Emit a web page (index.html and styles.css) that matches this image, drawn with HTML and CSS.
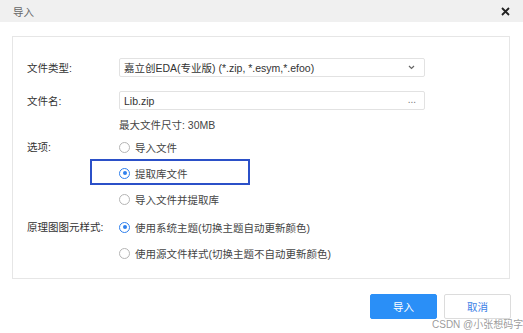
FILE: index.html
```html
<!DOCTYPE html>
<html lang="zh">
<head>
<meta charset="utf-8">
<link rel="stylesheet" href="styles.css">
</head>
<body>
<div class="dialog">
  <div class="titlebar">
    <span class="title">导入</span>
    <span class="close">
      <svg width="9" height="9" viewBox="0 0 9 9"><path d="M1 1L8 8M8 1L1 8" stroke="#222" stroke-width="1.8" fill="none"/></svg>
    </span>
  </div>
  <div class="panel">
    <div class="row">
      <div class="label">文件类型:</div>
      <div class="control">
        <div class="field select">
          <span class="value">嘉立创EDA(专业版) (*.zip, *.esym,*.efoo)</span>
          <svg class="chev" width="7" height="5" viewBox="0 0 7 5"><path d="M1 1L3.5 3.5L6 1" stroke="#666" stroke-width="1.2" fill="none"/></svg>
        </div>
      </div>
    </div>
    <div class="row row-gap">
      <div class="label">文件名:</div>
      <div class="control">
        <div class="field">
          <span class="value">Lib.zip</span>
          <span class="dots">...</span>
        </div>
      </div>
    </div>
    <div class="hint">最大文件尺寸: 30MB</div>
    <div class="group">
      <div class="label glabel">选项:</div>
      <div class="options">
        <div class="radio"><span class="circle"></span>导入文件</div>
        <div class="radio marked"><span class="circle on"></span>提取库文件<span class="highlight"></span></div>
        <div class="radio"><span class="circle"></span>导入文件并提取库</div>
      </div>
    </div>
    <div class="group group2">
      <div class="label glabel">原理图图元样式:</div>
      <div class="options">
        <div class="radio"><span class="circle on"></span>使用系统主题(切换主题自动更新颜色)</div>
        <div class="radio"><span class="circle"></span>使用源文件样式(切换主题不自动更新颜色)</div>
      </div>
    </div>
  </div>
  <div class="footer">
    <button class="btn primary">导入</button>
    <button class="btn">取消</button>
  </div>
  <div class="watermark">CSDN @小张想码字</div>
</div>
</body>
</html>
```
FILE: styles.css
```css
* { box-sizing: border-box; }
html, body { margin: 0; padding: 0; background: #fff; }
body {
  font-family: "Liberation Sans", "Noto Sans CJK SC", sans-serif;
  font-size: 10.5px;
  color: #333;
}
.dialog { position: relative; width: 523px; height: 333px; overflow: hidden; }
.titlebar {
  height: 22px;
  background: #f0f0f0;
  display: flex;
  align-items: center;
  justify-content: space-between;
  padding: 0 13px 0 13px;
}
.title { color: #666; }
.close { display: flex; align-items: center; }
.panel {
  margin: 14px 13px 0 12px;
  height: 243px;
  border: 1px solid #e6e6e6;
  padding: 21px 0 0 14px;
}
.row { display: flex; align-items: center; height: 19px; }
.row-gap { margin-top: 14px; }
.label { width: 92px; flex: none; color: #333; }
.control { flex: none; }
.field {
  width: 306px;
  height: 19px;
  border: 1px solid #e2e2e2;
  border-radius: 2px;
  display: flex;
  align-items: center;
  justify-content: space-between;
  padding: 0 8px 0 4px;
}
.value { color: #333; white-space: nowrap; }
.chev { margin-right: 1px; }
.dots { color: #777; font-size: 10px; padding-bottom: 3px; }
.hint { margin: 8px 0 0 92px; height: 14px; line-height: 14px; color: #444; }
.group { display: flex; margin-top: 2px; }
.group2 { margin-top: 2px; }
.glabel { height: 26px; line-height: 26px; }
.options { display: flex; flex-direction: column; }
.radio {
  position: relative;
  height: 26px;
  display: flex;
  align-items: center;
  color: #444;
  white-space: nowrap;
}
.circle {
  width: 11px;
  height: 11px;
  border: 1px solid #b5b5b5;
  border-radius: 50%;
  margin-right: 5px;
  display: flex;
  align-items: center;
  justify-content: center;
  flex: none;
}
.circle.on { border-color: #2f80ed; }
.circle.on::after {
  content: "";
  width: 4px;
  height: 4px;
  border-radius: 50%;
  background: #2f80ed;
}
.highlight {
  position: absolute;
  left: -29px;
  top: -1px;
  width: 160px;
  height: 26px;
  border: 2px solid #2b50c8;
}
.footer {
  display: flex;
  justify-content: flex-end;
  gap: 7px;
  margin-top: 15px;
  padding-right: 12px;
}
.btn {
  width: 67px;
  height: 25px;
  border: 1px solid #dcdcdc;
  border-radius: 2px;
  background: #fff;
  color: #3b7ee6;
  font-family: inherit;
  font-size: 10.5px;
  padding: 0;
}
.btn.primary { background: #2a8ff7; border-color: #2a8ff7; color: #fff; }
.watermark {
  position: absolute;
  left: 432px;
  top: 316px;
  font-size: 10px;
  color: rgba(120, 120, 120, 0.75);
  white-space: nowrap;
}
```
